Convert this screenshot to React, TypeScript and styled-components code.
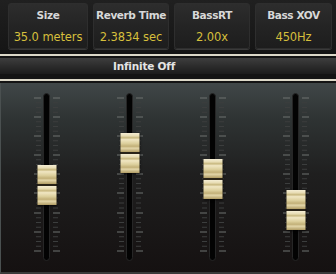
import styled, { createGlobalStyle } from "styled-components";

const GlobalStyle = createGlobalStyle`
    * {
        box-sizing: border-box;
    }
    body {
        margin: 0;
        background: #111;
        font-family: "DejaVu Sans", "Liberation Sans", sans-serif;
    }
`;

const Frame = styled.div`
    width: 336px;
    height: 274px;
    display: flex;
    flex-direction: column;
    background: #141414;
    overflow: hidden;
`;

const Header = styled.div`
    height: 52px;
    display: grid;
    grid-template-columns: 80px 76px 76px 77px;
    column-gap: 5px;
    padding: 3px 3px 3px 8px;
    background: linear-gradient(to bottom, #202020 0%, #151515 100%);
`;

const Cell = styled.div`
    display: flex;
    flex-direction: column;
    border: 1px solid #2e2e2e;
    border-radius: 3px;
    background: linear-gradient(to bottom, #2d2d2d 0%, #242424 50%, #1d1d1d 100%);
    box-shadow: 0 1px 0 #3a3a3a;
`;

const Label = styled.div`
    height: 22px;
    display: flex;
    align-items: center;
    justify-content: center;
    font-size: 10.5px;
    font-weight: bold;
    color: #d8d8d8;
    letter-spacing: -0.4px;
`;

const Value = styled.div`
    flex: 1;
    display: flex;
    align-items: center;
    justify-content: center;
    font-size: 11.5px;
    color: #d6bf3c;
    letter-spacing: -0.1px;
`;

const Rule = styled.div<{ $top: number }>`
    height: 2px;
    margin-top: ${(p) => p.$top}px;
    background: #dcd8c8;
    flex-shrink: 0;
`;

const Bar = styled.div`
    height: 16px;
    margin-top: 2px;
    display: flex;
    align-items: center;
    justify-content: center;
    padding-right: 48px;
    background: linear-gradient(to bottom, #3e3e3e 0%, #2c2c2c 50%, #1c1c1c 100%);
    font-size: 10.5px;
    font-weight: bold;
    color: #e4e4e4;
    letter-spacing: -0.2px;
    flex-shrink: 0;
`;

const Panel = styled.div`
    flex: 1;
    margin-top: 2px;
    display: grid;
    grid-template-columns: repeat(4, 83px);
    padding: 10px 4px 0 4px;
    border-left: 1px solid #4a5050;
    border-bottom: 2px solid #3a3a3a;
    background: linear-gradient(
        to bottom,
        #404748 0%,
        #2f3434 18%,
        #1f1f1f 48%,
        #151111 100%
    );
`;

const FaderSlot = styled.div`
    position: relative;
    height: 168px;
    display: flex;
    justify-content: center;
`;

const Scale = styled.svg`
    position: absolute;
    top: 0;
    left: 50%;
    transform: translateX(-50%);
`;

const Track = styled.div`
    width: 7px;
    height: 168px;
    border-radius: 4px;
    background: #030303;
    border: 1px solid #262626;
    position: relative;
    z-index: 1;
`;

const Knob = styled.div`
    position: absolute;
    left: 50%;
    transform: translateX(-50%);
    width: 19px;
    height: 40px;
    z-index: 2;
    display: flex;
    flex-direction: column;
    gap: 2px;
    background: #2a2418;
    box-shadow: 0 1px 2px rgba(0, 0, 0, 0.7);
`;

const KnobHalf = styled.div`
    flex: 1;
    background: linear-gradient(
        to bottom,
        #f4edd4 0%,
        #e8ddb4 15%,
        #c8b880 25%,
        #f0e6c2 35%,
        #dccf9c 55%,
        #c2b078 70%,
        #e2d5a8 80%,
        #b09c64 100%
    );
`;

const majors = [5, 24, 43, 62, 81, 100, 120, 139, 158];

const Ticks = () => (
    <Scale width="28" height="168" viewBox="0 0 28 168">
        {majors.map((y, i) => (
            <g key={y}>
                <line x1="1" x2="8" y1={y} y2={y} stroke="#6e7270" strokeWidth="1" />
                <line x1="20" x2="27" y1={y} y2={y} stroke="#6e7270" strokeWidth="1" />
                {i < majors.length - 1 &&
                    [1, 2, 3].map((k) => {
                        const yy = y + ((majors[i + 1] - y) * k) / 4;
                        return (
                            <g key={k}>
                                <line x1="3" x2="8" y1={yy} y2={yy} stroke="#3c3e3e" strokeWidth="1" />
                                <line x1="20" x2="25" y1={yy} y2={yy} stroke="#3c3e3e" strokeWidth="1" />
                            </g>
                        );
                    })}
            </g>
        ))}
    </Scale>
);

const params = [
    { label: "Size", value: "35.0 meters" },
    { label: "Reverb Time", value: "2.3834 sec" },
    { label: "BassRT", value: "2.00x" },
    { label: "Bass XOV", value: "450Hz" },
];

const knobTops = [72, 40, 66, 97];

const App = () => {
    return (
        <>
            <GlobalStyle />
            <Frame>
                <Header>
                    {params.map((p) => (
                        <Cell key={p.label}>
                            <Label>{p.label}</Label>
                            <Value>{p.value}</Value>
                        </Cell>
                    ))}
                </Header>
                <Rule $top={2} />
                <Bar>Infinite Off</Bar>
                <Rule $top={5} />
                <Panel>
                    {knobTops.map((top, i) => (
                        <FaderSlot key={i}>
                            <Ticks />
                            <Track />
                            <Knob style={{ top }}>
                                <KnobHalf />
                                <KnobHalf />
                            </Knob>
                        </FaderSlot>
                    ))}
                </Panel>
            </Frame>
        </>
    );
};

export default App;
